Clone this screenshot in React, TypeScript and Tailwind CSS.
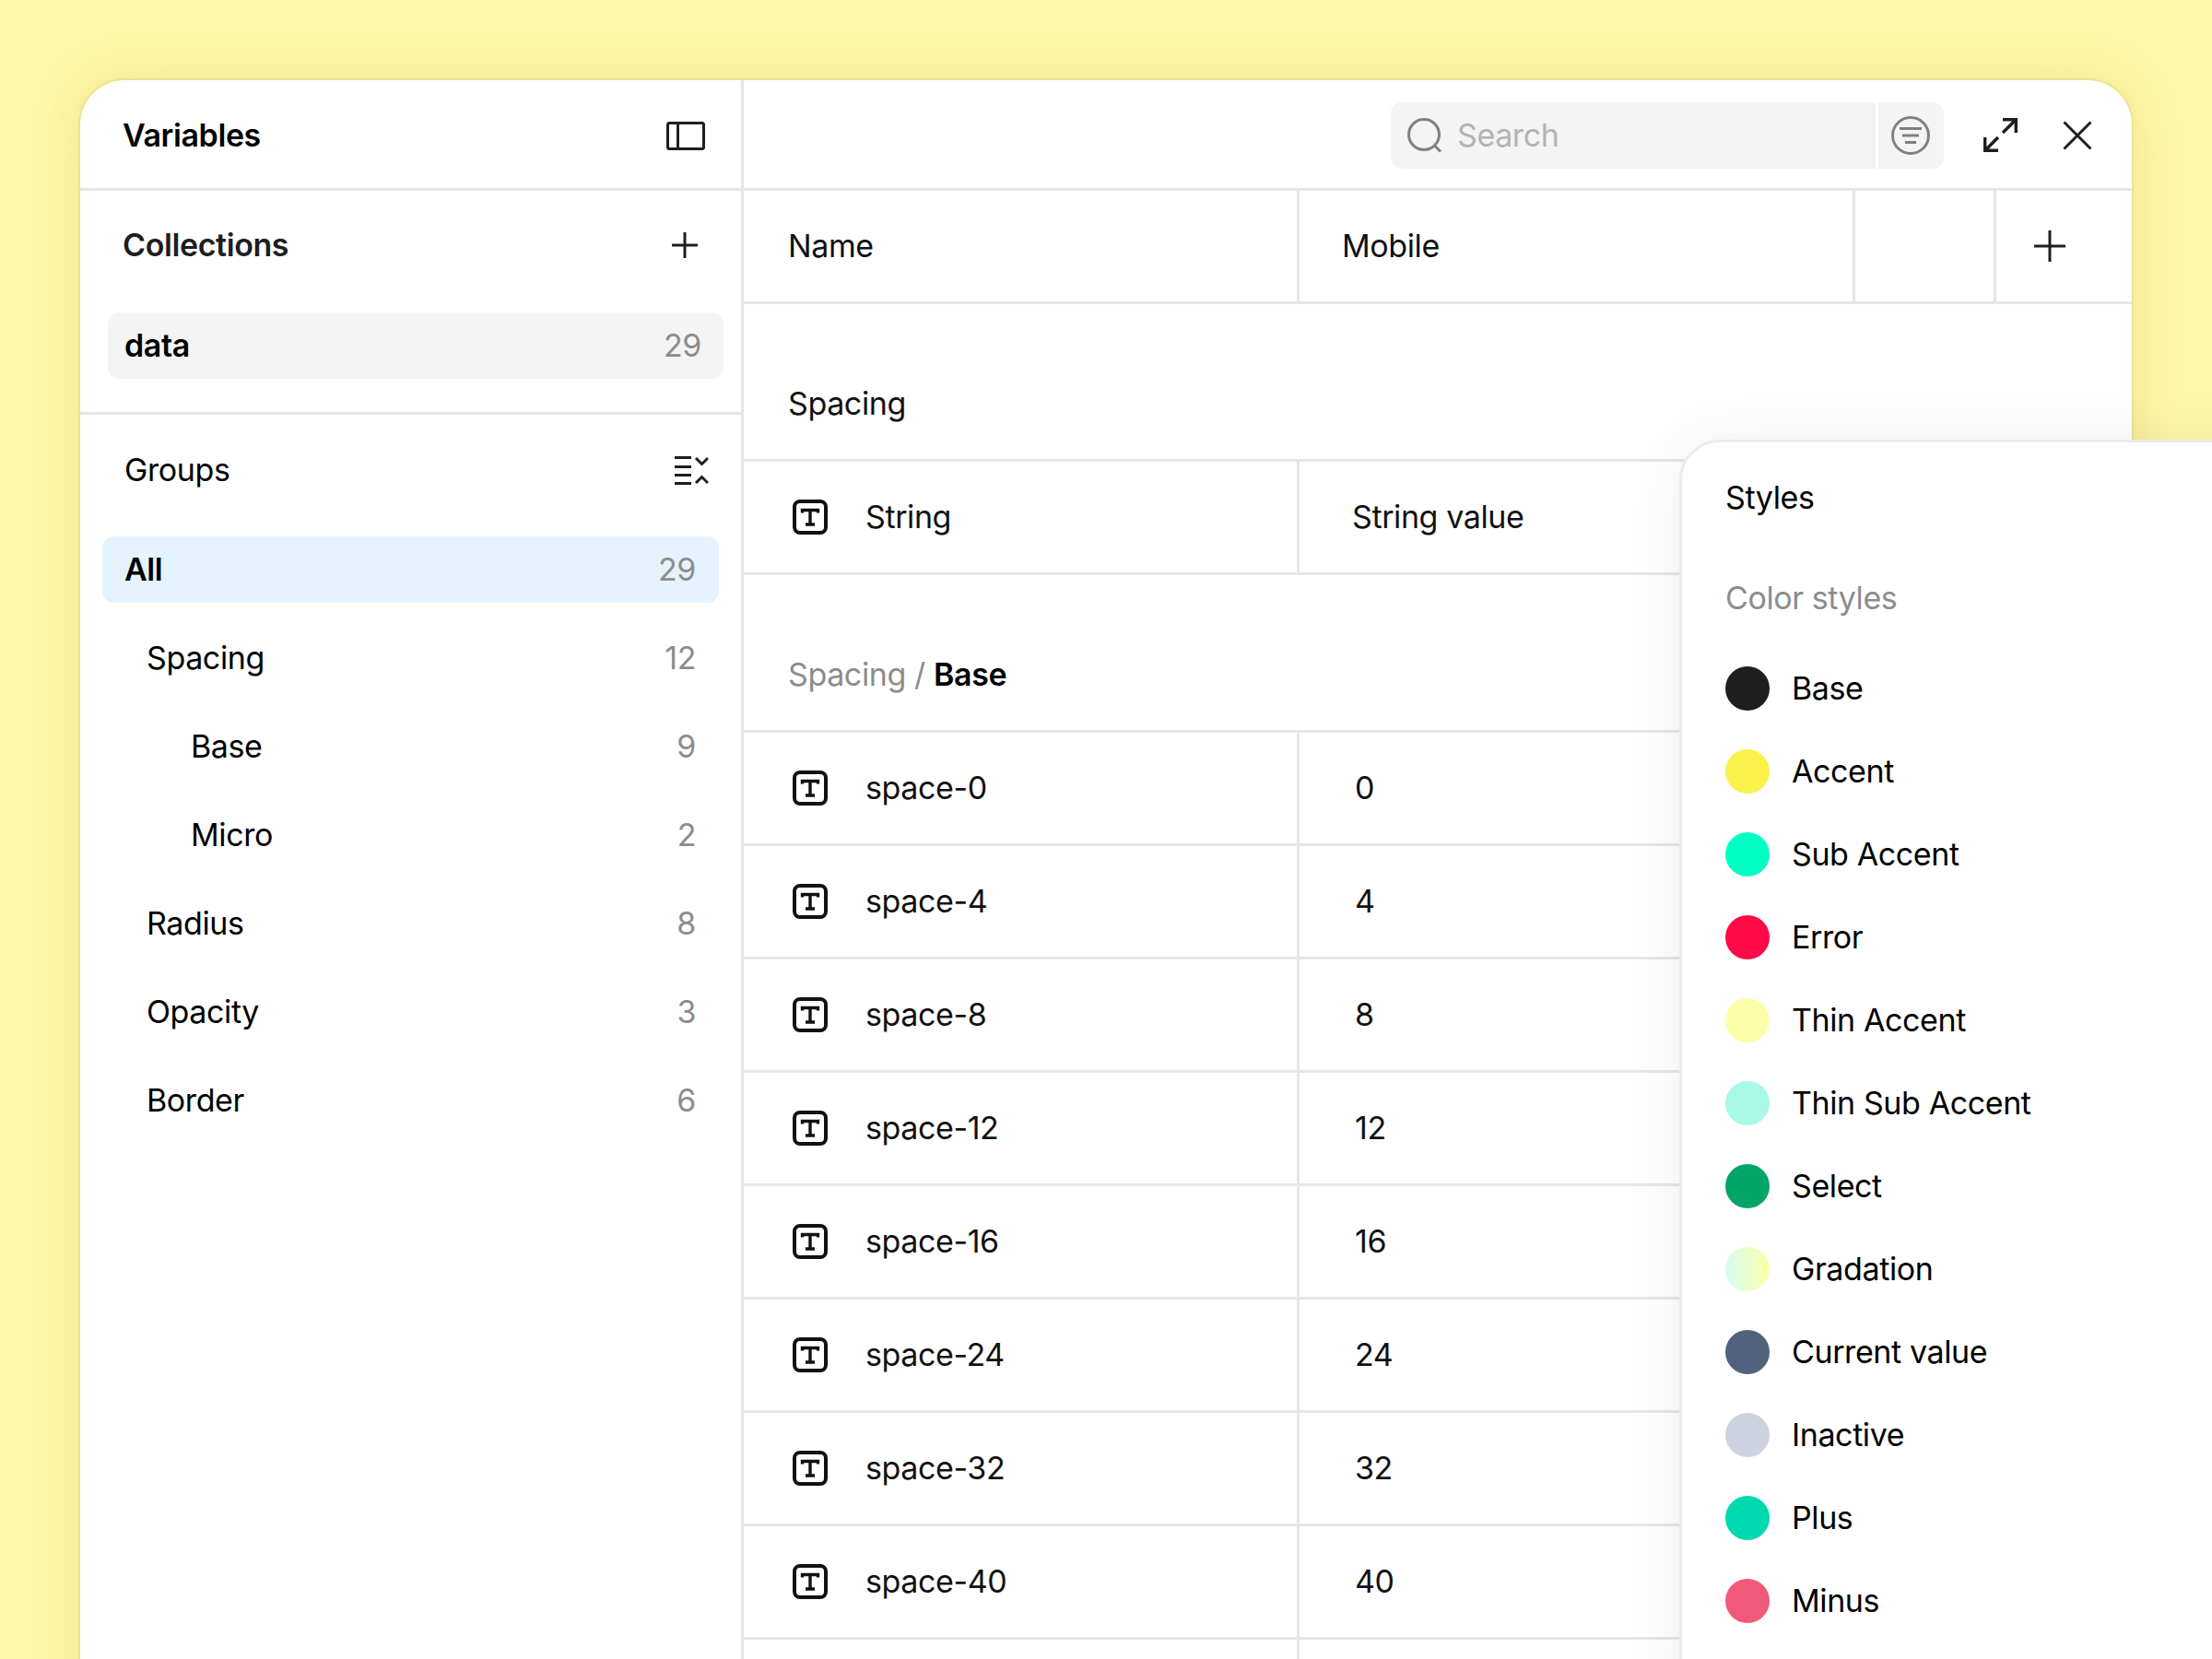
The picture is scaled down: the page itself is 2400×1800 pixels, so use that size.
import React from "react";

const groups = [
  { name: "Spacing", count: 12, indent: "pl-[48px]" },
  { name: "Base", count: 9, indent: "pl-[96px]" },
  { name: "Micro", count: 2, indent: "pl-[96px]" },
  { name: "Radius", count: 8, indent: "pl-[48px]" },
  { name: "Opacity", count: 3, indent: "pl-[48px]" },
  { name: "Border", count: 6, indent: "pl-[48px]" },
];

const rows = [
  ["space-0", "0"],
  ["space-4", "4"],
  ["space-8", "8"],
  ["space-12", "12"],
  ["space-16", "16"],
  ["space-24", "24"],
  ["space-32", "32"],
  ["space-40", "40"],
  ["", ""],
];

const styles = [
  { name: "Base", cls: "bg-[#1e1e1e]" },
  { name: "Accent", cls: "bg-[#faf24b]" },
  { name: "Sub Accent", cls: "bg-[#00ffc2]" },
  { name: "Error", cls: "bg-[#ff0a47]" },
  { name: "Thin Accent", cls: "bg-[#fdffa8]" },
  { name: "Thin Sub Accent", cls: "bg-[#a8f9e6]" },
  { name: "Select", cls: "bg-[#02a568]" },
  { name: "Gradation", cls: "bg-gradient-to-r from-[#d6fbf0] to-[#fdffa6]" },
  { name: "Current value", cls: "bg-[#51637c]" },
  { name: "Inactive", cls: "bg-[#cdd3de]" },
  { name: "Plus", cls: "bg-[#00d8b0]" },
  { name: "Minus", cls: "bg-[#f0597a]" },
];

function PlusIcon({ size }: { size: number }) {
  return (
    <svg width={size} height={size} viewBox="0 0 28 28" fill="none" stroke="#1e1e1e" strokeWidth={28 * 3 / size}>
      <path d="M14 0V28M0 14H28" />
    </svg>
  );
}

function TypeIcon() {
  return (
    <svg width="38" height="38" viewBox="0 0 38 38" fill="none" className="shrink-0">
      <rect x="2" y="2" width="34" height="34" rx="6" stroke="#111" strokeWidth="4" />
      <path d="M10.5 14.5V11.5H27.5V14.5M19 11.5V27M14 27H24" stroke="#111" strokeWidth="3.4" />
    </svg>
  );
}

function Count({ children }: { children: React.ReactNode }) {
  return <span className="text-[#8c8c8c]">{children}</span>;
}

function Sidebar() {
  return (
    <aside className="w-[720px] shrink-0 border-r-[3px] border-[#e6e6e6]">
      <div className="flex h-[120px] items-center justify-between border-b-[3px] border-[#e6e6e6] pl-[46px] pr-[39px] pt-[3px]">
        <span className="font-semibold text-black">Variables</span>
        <svg width="42" height="31" viewBox="0 0 42 31" fill="none" stroke="#1e1e1e" strokeWidth="3">
          <rect x="1.5" y="1.5" width="39" height="28" rx="2" />
          <path d="M12.5 1.5V29.5" />
        </svg>
      </div>
      <div className="border-b-[3px] border-[#e6e6e6] pb-[36px]">
        <div className="flex h-[118px] items-center justify-between pl-[46px] pr-[47px]">
          <span className="font-semibold text-[#1e1e1e]">Collections</span>
          <PlusIcon size={28} />
        </div>
        <div className="ml-[30px] mr-[19px] mt-[14px] flex h-[72px] items-center justify-between rounded-[12px] bg-[#f4f4f4] pl-[18px] pr-[24px]">
          <span className="font-semibold text-black">data</span>
          <Count>29</Count>
        </div>
      </div>
      <div className="flex h-[121px] items-center justify-between pb-[1px] pl-[48px] pr-[35px]">
        <span className="text-black">Groups</span>
        <svg width="37" height="31" viewBox="0 0 37 31" fill="none" stroke="#1e1e1e" strokeWidth="3">
          <path d="M0 1.5H18M0 11.5H18M0 20.5H18M0 29.5H18" />
          <path d="M23 2L29.5 8.5L36 2M23 29L29.5 22.5L36 29" />
        </svg>
      </div>
      <div className="ml-[24px] mr-[24px] mt-[11px] flex flex-col gap-[24px]">
        <div className="flex h-[72px] items-center justify-between rounded-[12px] bg-[#e5f3fe] pl-[24px] pr-[25px]">
          <span className="font-semibold text-black">All</span>
          <Count>29</Count>
        </div>
        {groups.map((g) => (
          <div key={g.name} className={`flex h-[72px] items-center justify-between pr-[25px] ${g.indent}`}>
            <span className="text-black">{g.name}</span>
            <Count>{g.count}</Count>
          </div>
        ))}
      </div>
    </aside>
  );
}

function TopBar() {
  return (
    <div className="flex h-[120px] items-start border-b-[3px] border-[#e6e6e6]">
      <div className="ml-[702px] mt-[24px] flex h-[72px] w-[600px] overflow-hidden rounded-[12px]">
        <div className="flex flex-1 items-center gap-[16px] bg-[#f4f4f4] pl-[18px]">
          <svg width="38" height="38" viewBox="0 0 38 38" fill="none" stroke="#808080" strokeWidth="3">
            <circle cx="18" cy="18" r="16.5" />
            <path d="M29.5 30L36 36.5" />
          </svg>
          <span className="text-[#b3b3b3]">Search</span>
        </div>
        <div className="ml-[3px] flex w-[71px] items-center justify-center bg-[#f4f4f4] pr-[1px]">
          <svg width="42" height="42" viewBox="0 0 42 42" fill="none" stroke="#808080" strokeWidth="3">
            <circle cx="21" cy="21" r="19.5" />
            <path d="M9 13.5H33M12 21H30M15 28.5H27" />
          </svg>
        </div>
      </div>
      <div className="ml-[43px] mt-[41px]">
        <svg width="37" height="37" viewBox="0 0 37 37" fill="none" stroke="#1e1e1e" strokeWidth="3.4">
          <path d="M21 1.7H35.3V16M35 2L21 16M16 35.3H1.7V21M2 35L16 21" />
        </svg>
      </div>
      <div className="ml-[49px] mt-[44px]">
        <svg width="32" height="32" viewBox="0 0 32 32" fill="none" stroke="#1e1e1e" strokeWidth="3">
          <path d="M1.5 1.5L30.5 30.5M30.5 1.5L1.5 30.5" />
        </svg>
      </div>
    </div>
  );
}

function ColumnHeader() {
  return (
    <div className="flex h-[123px] items-stretch border-b-[3px] border-[#e6e6e6] text-[#111]">
      <div className="flex w-[603px] items-center border-r-[3px] border-[#e6e6e6] pl-[48px]">Name</div>
      <div className="flex w-[603px] items-center border-r-[3px] border-[#e6e6e6] pl-[46px]">Mobile</div>
      <div className="w-[153px] border-r-[3px] border-[#e6e6e6]" />
      <div className="flex flex-1 items-center justify-center pr-[31px]">
        <PlusIcon size={34} />
      </div>
    </div>
  );
}

function Row({ name, value, pl }: { name: string; value: string; pl: string }) {
  return (
    <div className="flex h-[123px] items-stretch border-b-[3px] border-[#e6e6e6] text-[#111]">
      <div className="flex w-[603px] items-center gap-[41px] border-r-[3px] border-[#e6e6e6] pl-[53px]">
        {name && <TypeIcon />}
        <span>{name}</span>
      </div>
      <div className={`flex flex-1 items-center ${pl}`}>{value}</div>
    </div>
  );
}

function SectionTitle({ children }: { children: React.ReactNode }) {
  return (
    <div className="flex h-[171px] items-end border-b-[3px] border-[#e6e6e6] pb-[38px] pl-[48px]">{children}</div>
  );
}

function Main() {
  return (
    <main className="flex-1">
      <TopBar />
      <ColumnHeader />
      <SectionTitle>
        <span className="text-[#111]">Spacing</span>
      </SectionTitle>
      <Row name="String" value="String value" pl="pl-[57px]" />
      <SectionTitle>
        <span className="whitespace-pre text-[#8c8c8c]">Spacing / </span>
        <span className="font-semibold text-black">Base</span>
      </SectionTitle>
      {rows.map((r, i) => (
        <Row key={i} name={r[0]} value={r[1]} pl="pl-[60px]" />
      ))}
    </main>
  );
}

function StylesPanel() {
  return (
    <div className="absolute left-[1735px] top-[390px] h-[1500px] w-[800px] rounded-tl-[44px] border-[3px] border-[#ececec] bg-white pl-[47px] shadow-[0_0_60px_rgba(0,0,0,0.07)]">
      <div className="flex h-[120px] items-center text-black">Styles</div>
      <div className="flex h-[98px] items-center text-[#8c8c8c]">Color styles</div>
      <div className="mt-[25px] flex flex-col gap-[42px]">
        {styles.map((s) => (
          <div key={s.name} className="flex h-[48px] items-center gap-[24px] text-black">
            <span className={`h-[48px] w-[48px] rounded-full ${s.cls}`} />
            <span>{s.name}</span>
          </div>
        ))}
      </div>
    </div>
  );
}

export default function App() {
  return (
    <div className="h-[1800px] w-[2400px] overflow-hidden bg-[#fff8a6] pl-[87px] pt-[87px] font-[Inter,sans-serif] text-[34px] leading-[44px] tracking-[-0.4px]">
      <div className="relative flex h-[1800px] w-[2226px] rounded-t-[48px] bg-white shadow-[0_0_0_2px_rgba(190,175,70,0.18),0_0_60px_rgba(120,100,0,0.14)]">
        <Sidebar />
        <Main />
        <StylesPanel />
      </div>
    </div>
  );
}
